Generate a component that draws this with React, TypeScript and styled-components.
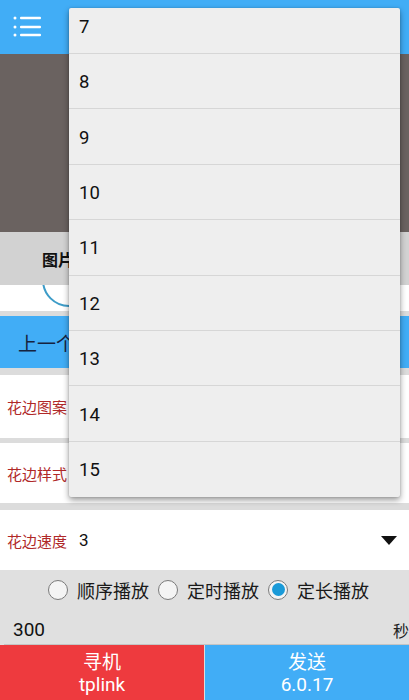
import React, { useState } from 'react';
import styled, { createGlobalStyle } from 'styled-components';

const GlobalStyle = createGlobalStyle`
  html, body {
    margin: 0;
    padding: 0;
    background: #ffffff;
  }
  body {
    font-family: Roboto, "Noto Sans CJK SC", "Noto Sans", sans-serif;
  }
  * {
    box-sizing: border-box;
  }
`;

const Screen = styled.div`
  position: relative;
  width: 409px;
  height: 700px;
  overflow: hidden;
  display: flex;
  flex-direction: column;
  background: #dcdcdc;
`;

const Header = styled.div`
  height: 54px;
  flex: none;
  background: #41adf6;
  display: flex;
  align-items: center;
  padding-left: 13px;
`;

const MenuButton = styled.button`
  width: 30px;
  height: 30px;
  padding: 0;
  border: none;
  background: transparent;
  display: flex;
  align-items: center;
  justify-content: center;
`;

const Banner = styled.div`
  height: 178px;
  flex: none;
  background: #6a6260;
`;

const TabBar = styled.div`
  height: 53px;
  flex: none;
  background: #d2d2d2;
  display: flex;
`;

const Tab = styled.div`
  width: 116px;
  display: flex;
  align-items: center;
  justify-content: center;
  font-size: 16px;
  font-weight: 700;
  color: #111111;
`;

const PreviewRow = styled.div`
  height: 26px;
  flex: none;
  background: #ffffff;
  overflow: hidden;
  position: relative;
`;

const PreviewCircle = styled.div`
  position: absolute;
  left: 42px;
  top: -32px;
  width: 54px;
  height: 54px;
  border-radius: 50%;
  border: 2px solid #3d9cc8;
`;

const Gap = styled.div<{ $h: number }>`
  height: ${(p) => p.$h}px;
  flex: none;
`;

const NavBar = styled.div`
  height: 52px;
  flex: none;
  background: #41adf6;
  display: flex;
  align-items: center;
  justify-content: space-between;
  padding: 0 18px;
`;

const NavButton = styled.span`
  font-size: 19px;
  color: #16233f;
`;

const FieldRow = styled.div<{ $h: number }>`
  height: ${(p) => p.$h}px;
  flex: none;
  background: #ffffff;
  display: flex;
  align-items: center;
  padding: 0 12px 0 7px;
`;

const FieldLabel = styled.span`
  font-size: 15px;
  color: #b02828;
`;

const FieldValue = styled.span`
  flex: 1;
  margin-left: 12px;
  font-size: 17px;
  color: #111111;
`;

const Caret = styled.span`
  width: 0;
  height: 0;
  border-left: 8px solid transparent;
  border-right: 8px solid transparent;
  border-top: 9px solid #111111;
`;

const Options = styled.div`
  height: 75px;
  flex: none;
  background: #e0e0e0;
  display: flex;
  flex-direction: column;
`;

const RadioGroup = styled.div`
  height: 38px;
  display: flex;
  align-items: center;
  justify-content: center;
  padding-top: 1px;
  padding-left: 8px;
`;

const RadioItem = styled.label`
  display: flex;
  align-items: center;
  margin-right: 9px;
  font-size: 18px;
  color: #1a1a1a;
  &:last-child {
    margin-right: 0;
  }
`;

const RadioDot = styled.span<{ $on: boolean }>`
  width: 20px;
  height: 20px;
  border-radius: 50%;
  border: 1px solid #7a7a7a;
  background: #f4f4f4;
  display: flex;
  align-items: center;
  justify-content: center;
  margin-right: 9px;
  &::after {
    content: '';
    width: 13px;
    height: 13px;
    border-radius: 50%;
    background: ${(p) => (p.$on ? '#1a9ad8' : 'transparent')};
  }
`;

const InputRow = styled.div`
  flex: 1;
  display: flex;
  align-items: center;
  justify-content: space-between;
  margin: 0 -30px 0 4px;
  padding: 0 0 0 9px;
  border-bottom: 1px solid #c4c4c4;
`;

const InputValue = styled.span`
  font-size: 19px;
  color: #111111;
  padding-top: 6px;
`;

const Unit = styled.span`
  font-size: 16px;
  color: #222222;
  width: 46px;
  padding-top: 8px;
`;

const Footer = styled.div`
  height: 55px;
  flex: none;
  display: flex;
`;

const FooterButton = styled.div<{ $bg: string }>`
  flex: 1;
  background: ${(p) => p.$bg};
  color: #ffffff;
  font-size: 19px;
  line-height: 22px;
  padding-top: 3px;
  display: flex;
  flex-direction: column;
  align-items: center;
  justify-content: center;
  & + & {
    margin-left: 1px;
  }
`;

const Popup = styled.div`
  position: absolute;
  left: 69px;
  top: 8px;
  width: 331px;
  height: 489px;
  background: #eeeeee;
  border-radius: 2px;
  box-shadow: 0 3px 6px rgba(0, 0, 0, 0.4), 0 0 2px rgba(0, 0, 0, 0.2);
  overflow: hidden;
`;

const PopupList = styled.div`
  margin-top: -9.4px;
`;

const PopupItem = styled.div`
  height: 55.4px;
  display: flex;
  align-items: center;
  padding: 2px 0 0 10px;
  font-size: 18.5px;
  color: #111111;
  border-bottom: 1px solid #d6d6d6;
  &:last-child {
    border-bottom: none;
  }
`;

const MenuIcon = () => (
  <svg width="30" height="22" viewBox="0 0 30 22">
    {[2, 11, 19].map((y) => (
      <g key={y} fill="#ffffff">
        <circle cx="2" cy={y} r="1.5" />
        <rect x="7" y={y - 1.3} width="21" height="2.6" rx="1" />
      </g>
    ))}
  </svg>
);

const modes = ['顺序播放', '定时播放', '定长播放'];
const speeds = [7, 8, 9, 10, 11, 12, 13, 14, 15];

export default function App() {
  const [mode, setMode] = useState(2);

  return (
    <Screen>
      <GlobalStyle />
      <Header>
        <MenuButton>
          <MenuIcon />
        </MenuButton>
      </Header>
      <Banner />
      <TabBar>
        <Tab>图片</Tab>
        <Tab>文字</Tab>
        <Tab>花边</Tab>
      </TabBar>
      <PreviewRow>
        <PreviewCircle />
      </PreviewRow>
      <Gap $h={5} />
      <NavBar>
        <NavButton>上一个</NavButton>
        <NavButton>下一个</NavButton>
      </NavBar>
      <Gap $h={7} />
      <FieldRow $h={63}>
        <FieldLabel>花边图案</FieldLabel>
        <FieldValue />
      </FieldRow>
      <Gap $h={5} />
      <FieldRow $h={60}>
        <FieldLabel>花边样式</FieldLabel>
        <FieldValue />
      </FieldRow>
      <Gap $h={7} />
      <FieldRow $h={60}>
        <FieldLabel>花边速度</FieldLabel>
        <FieldValue>3</FieldValue>
        <Caret />
      </FieldRow>
      <Options>
        <RadioGroup>
          {modes.map((m, i) => (
            <RadioItem key={m} onClick={() => setMode(i)}>
              <RadioDot $on={mode === i} />
              {m}
            </RadioItem>
          ))}
        </RadioGroup>
        <InputRow>
          <InputValue>300</InputValue>
          <Unit>秒</Unit>
        </InputRow>
      </Options>
      <Footer>
        <FooterButton $bg="#ee3a3e">
          <span>寻机</span>
          <span>tplink</span>
        </FooterButton>
        <FooterButton $bg="#41adf6">
          <span>发送</span>
          <span>6.0.17</span>
        </FooterButton>
      </Footer>
      <Popup>
        <PopupList>
          {speeds.map((s) => (
            <PopupItem key={s}>{s}</PopupItem>
          ))}
        </PopupList>
      </Popup>
    </Screen>
  );
}
